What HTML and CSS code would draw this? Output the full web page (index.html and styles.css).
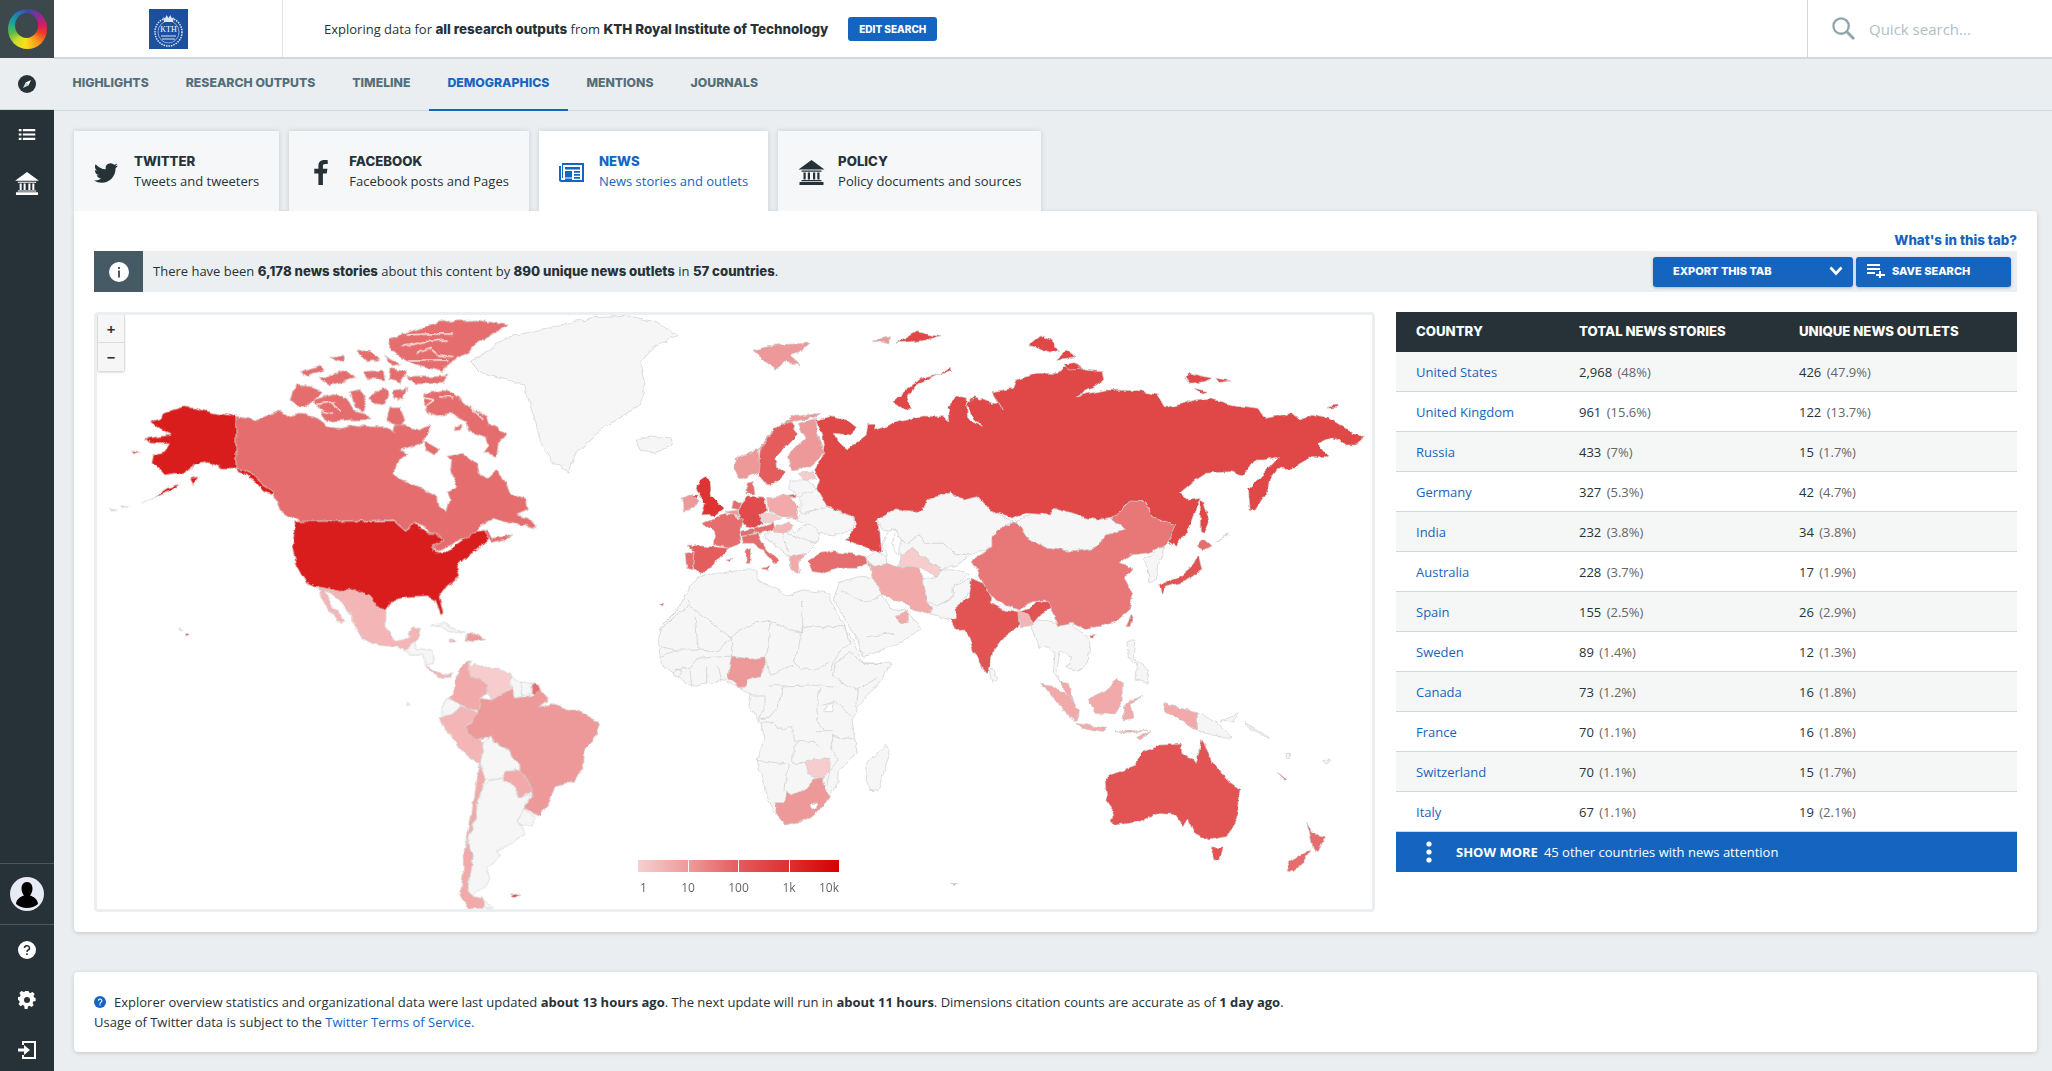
FILE: index.html
```html
<!DOCTYPE html>
<html lang="en">
<head>
<meta charset="utf-8">
<title>Demographics</title>
<link rel="stylesheet" href="styles.css">
</head>
<body>
<div class="app">
  <aside class="side">
    <div class="side-logo"><div class="ring"><div class="ring-hole"></div></div></div>
    <div class="side-compass">
      <svg viewBox="0 0 20 20" width="18" height="18"><circle cx="10" cy="10" r="10" fill="#263238"/><path d="M14.500 5.500 11.600 11.600 8.400 8.400Z" fill="#fff"/><path d="M5.500 14.500 8.400 8.400 11.600 11.600Z" fill="#cfd8dc"/></svg>
    </div>
    <div class="side-nav">
      <svg viewBox="0 0 18 12" width="18" height="11"><path fill="#fff" d="M0 0h3v2.400H0zM4.500 0H18v2.400H4.500zM0 4.800h3v2.400H0zM4.500 4.800H18v2.400H4.500zM0 9.600h3V12H0zM4.500 9.600H18V12H4.500z"/></svg>
      <svg viewBox="0 0 26 25" width="24" height="23"><path fill="#fff" d="M13 0 26 9.500H0zM1 22h24v3H1zM3 20h20v1.300H3zM3 10.500h20v1.300H3zM5 12.500h2.200V19.500H5zM9.300 12.500h2.200V19.500H9.300zM14.500 12.500h2.200V19.500h-2.200zM18.800 12.500H21V19.500h-2.200z"/></svg>
    </div>
    <div class="side-user">
      <svg viewBox="0 0 34 34" width="34" height="34"><circle cx="17" cy="17" r="17" fill="#e8eaf6"/><path fill="#000" d="M17 5c3.800 0 5.500 3 5.500 6.500 0 3-1.200 5.500-2.500 7 4 1.300 7.500 3.800 8 8.500a17 17 0 0 1-22 0c.5-4.700 4-7.200 8-8.500-1.300-1.500-2.500-4-2.500-7C11.500 8 13.200 5 17 5z"/></svg>
    </div>
    <div class="side-tools">
      <svg viewBox="0 0 18 18" width="18" height="18"><circle cx="9" cy="9" r="9" fill="#fff"/><path d="M6.500 7a2.500 2.300 0 1 1 3.700 2c-.9.500-1.200 1-1.200 2" fill="none" stroke="#263238" stroke-width="1.500"/><rect x="8.200" y="12.300" width="1.600" height="1.700" fill="#263238"/></svg>
      <svg viewBox="0 0 18 18" width="18" height="18"><path fill="#fff" d="M7.500 0h3l.5 2.500 1.600.7L14.800 2 17 4.200l-1.200 2.200.6 1.600L18 8.500v3l-2.500.5-.7 1.600 1.200 2.200-2.200 2.200-2.200-1.300-1.600.7-.5 2.500h-3L6 16.500l-1.600-.7L2.200 17 0 14.800l1.300-2.200-.7-1.600L-1 10.500V7.500L1.500 7l.7-1.600L1 3.200 3.200 1l2.200 1.200L7 1.500z" transform="translate(.5 -1) scale(.95)"/><circle cx="9" cy="9" r="3" fill="#263238"/></svg>
      <svg viewBox="0 0 18 18" width="18" height="18"><path fill="#fff" d="M4 0h14v18H4v-4h2v2h10V2H6v2H4z"/><path fill="#fff" d="M0 7.500h6V4l6 5-6 5v-3.500H0z"/></svg>
    </div>
  </aside>

  <main class="main">
    <header class="top">
      <div class="brand">
        <div class="kth">
          <svg viewBox="0 0 39 40" width="39" height="40"><rect width="39" height="40" fill="#1d4f9f"/><ellipse cx="19.500" cy="23" rx="13.500" ry="14" fill="none" stroke="#dce6f5" stroke-width="1.500" stroke-dasharray="1.500 1"/><ellipse cx="19.500" cy="23" rx="10.500" ry="11" fill="none" stroke="#dce6f5" stroke-width=".6"/><path d="M14 8l2 2 1.500-4 2 3 2-3 1.500 4 2-2-1 5H15z" fill="#dce6f5"/><text class="kth-txt" x="19.500" y="23">KTH</text><path d="M12 27h15M13 30h13" stroke="#dce6f5"/></svg>
        </div>
      </div>
      <div class="scope">
        <p class="scope-text">Exploring data for <b>all research outputs</b> from <b>KTH Royal Institute of Technology</b></p>
        <a class="edit-btn">EDIT SEARCH</a>
      </div>
      <div class="search">
        <svg viewBox="0 0 24 24" width="23" height="23"><circle cx="9.500" cy="9.500" r="8" fill="none" stroke="#90a4ae" stroke-width="2.400"/><path d="M15.500 15.500 23 23" stroke="#90a4ae" stroke-width="3"/></svg>
        <span class="search-ph">Quick search...</span>
      </div>
    </header>

    <nav class="nav">
      <a class="nav-item">HIGHLIGHTS</a>
      <a class="nav-item">RESEARCH OUTPUTS</a>
      <a class="nav-item">TIMELINE</a>
      <a class="nav-item active">DEMOGRAPHICS</a>
      <a class="nav-item">MENTIONS</a>
      <a class="nav-item">JOURNALS</a>
    </nav>

    <div class="content">
      <div class="tabs">
        <a class="tab">
          <span class="tab-icon"><svg viewBox="0 0 24 24" width="24" height="24"><path fill="#263238" d="M23.953 4.570a10 10 0 0 1-2.825.775 4.958 4.958 0 0 0 2.163-2.723c-.951.555-2.005.959-3.127 1.184a4.920 4.920 0 0 0-8.384 4.482C7.690 8.095 4.067 6.130 1.640 3.162a4.822 4.822 0 0 0-.666 2.475c0 1.710.870 3.213 2.188 4.096a4.904 4.904 0 0 1-2.228-.616v.060a4.923 4.923 0 0 0 3.946 4.827 4.996 4.996 0 0 1-2.212.085 4.936 4.936 0 0 0 4.604 3.417 9.867 9.867 0 0 1-6.102 2.105c-.390 0-.779-.023-1.170-.067a13.995 13.995 0 0 0 7.557 2.209c9.053 0 13.998-7.496 13.998-13.985 0-.210 0-.420-.015-.630A9.935 9.935 0 0 0 24 4.590z"/></svg></span>
          <span class="tab-text"><b>TWITTER</b><span>Tweets and tweeters</span></span>
        </a>
        <a class="tab">
          <span class="tab-icon"><svg class="fb" viewBox="0 0 14 26" width="14" height="25"><path fill="#263238" d="M9 26V14h4l.7-5H9V6.500c0-1.400.5-2.300 2.400-2.300H14V.2C13.500.1 12.100 0 10.400 0 6.800 0 4.300 2.200 4.300 6.100V9H0v5h4.300v12z"/></svg></span>
          <span class="tab-text"><b>FACEBOOK</b><span>Facebook posts and Pages</span></span>
        </a>
        <a class="tab current">
          <span class="tab-icon"><svg viewBox="0 0 25 19" width="25" height="19"><path fill="#1565c0" d="M3 0h22v19H2a2 2 0 0 1-2-2V3h2v14h21V2H4v13H3z"/><path fill="#1565c0" d="M6 4h15v2.500H6zM6 8h7v6.500H6zM15 8h6v1.800h-6zM15 11h6v1.800h-6zM15 14h6v1.800h-6zM6 15.500h7V17H6z"/></svg></span>
          <span class="tab-text"><b>NEWS</b><span>News stories and outlets</span></span>
        </a>
        <a class="tab">
          <span class="tab-icon"><svg viewBox="0 0 26 25" width="27" height="25"><path fill="#263238" d="M13 0 26 9.500H0zM1 22h24v3H1zM3 20h20v1.300H3zM3 10.500h20v1.300H3zM5 12.500h2.200V19.500H5zM9.300 12.500h2.200V19.500H9.300zM14.500 12.500h2.200V19.500h-2.200zM18.800 12.500H21V19.500h-2.200z"/></svg></span>
          <span class="tab-text"><b>POLICY</b><span>Policy documents and sources</span></span>
        </a>
      </div>

      <section class="panel">
        <div class="panel-link"><a>What's in this tab?</a></div>
        <div class="infobar">
          <span class="info-icon"><svg viewBox="0 0 20 20" width="20" height="20"><circle cx="10" cy="10" r="10" fill="#fff"/><rect x="9" y="8.500" width="2" height="7" fill="#455a64"/><rect x="9" y="5" width="2" height="2" fill="#455a64"/></svg></span>
          <p class="info-text">There have been <b>6,178 news stories</b> about this content by <b>890 unique news outlets</b> in <b>57 countries</b>.</p>
          <div class="info-actions">
            <a class="act-btn export"><span>EXPORT THIS TAB</span><svg viewBox="0 0 14 10" width="14" height="10"><path d="M1.500 1.500 7 7.500l5.500-6" fill="none" stroke="#fff" stroke-width="2.600"/></svg></a>
            <a class="act-btn save"><svg viewBox="0 0 18 14" width="18" height="14"><path fill="#fff" d="M0 0h13v2H0zM0 4h13v2H0zM0 8h8v2H0zM12 7h2v3h4v2h-4v3h-2v-3H9v-2h3z"/></svg><span>SAVE SEARCH</span></a>
          </div>
        </div>

        <div class="data">
          <div class="map">
            <svg class="world" viewBox="97 315 1275 594" width="1275" height="594">
              <defs>
                <filter id="rough" filterUnits="userSpaceOnUse" x="97" y="315" width="1275" height="594">
                  <feTurbulence type="fractalNoise" baseFrequency=".11" numOctaves="3" seed="7" result="n"/>
                  <feDisplacementMap in="SourceGraphic" in2="n" scale="5" xChannelSelector="R" yChannelSelector="G"/>
                  <feGaussianBlur stdDeviation=".35"/>
                </filter>
              </defs>
              <g class="rough">
              <!-- grey countries, page coordinates -->
              <g class="g">
                <polygon points="470,361 490,350 505,338 530,332 560,325 590,318 630,316 655,322 678,335 655,345 640,362 645,385 640,405 603,428 577,452 568,472 554,464 541,444 532,408 523,384 483,374"/>
                <polygon points="660,627 677,610 693,583 703,575 743,570 757,570 757,580 773,587 787,595 802,590 830,593 830,600 857,647 863,663 892,663 883,678 858,707 852,720 855,740 857,752 838,773 838,783 828,797 810,817 785,825 778,817 767,797 757,760 765,738 760,723 748,705 750,695 738,687 725,680 692,687 660,663 658,647 660,630"/>
              </g>
              <g class="g" transform="translate(650 600) scale(.3333)">
                <polygon points="705,430 718,465 700,520 685,570 660,572 645,545 655,480 690,455"/>
                <polygon points="1018,210 1030,205 1040,235 1025,245"/>
                <polyline class="ln" points="30,90 90,35 110,25 115,0"/>
                <polyline class="ln" points="115,15 240,110 320,65 360,65 458,102 458,0"/>
                <polyline class="ln" points="135,50 145,150 80,150 30,140"/>
                <polyline class="ln" points="145,150 205,155 245,110 245,168"/>
                <polyline class="ln" points="360,65 355,130 345,170"/>
                <polyline class="ln" points="458,80 585,80 600,130 575,150 550,185 540,215"/>
                <polyline class="ln" points="458,80 445,145 430,180 450,205 495,210 540,185"/>
                <polyline class="ln" points="350,175 360,225 430,195"/>
                <polyline class="ln" points="355,255 395,258 480,255 560,262"/>
                <polyline class="ln" points="555,190 600,155 640,190 695,190"/>
                <polyline class="ln" points="555,190 550,230 620,270 680,235"/>
                <polyline class="ln" points="625,270 620,320"/>
                <polyline class="ln" points="400,258 385,320 355,355 325,355"/>
                <polyline class="ln" points="300,285 345,285 345,320 325,355"/>
                <polyline class="ln" points="510,265 500,320 505,370 520,395"/>
                <polyline class="ln" points="510,320 550,300 605,350"/>
                <polyline class="ln" points="330,365 375,368 385,385 425,380 430,420 495,425 505,440"/>
                <polyline class="ln" points="445,420 430,440 428,490 465,490"/>
                <polyline class="ln" points="322,482 415,492 405,570"/>
                <polyline class="ln" points="545,405 610,420"/>
                <polyline class="ln" points="545,405 545,450 565,480 540,510 530,560"/>
                <polyline class="ln" points="495,395 545,395"/>
                <polyline class="ln" points="75,205 120,205 145,175 245,168"/>
                <polyline class="ln" points="120,205 125,260"/>
                <polyline class="ln" points="170,200 170,255"/>
                <polyline class="ln" points="205,195 215,245"/>
                <polyline class="ln" points="30,170 80,150"/>
                <circle class="ln" cx="82" cy="218" r="12"/>
                <polyline class="ln" points="640,100 740,115 760,100"/>
                <polygon class="hole" points="528,310 552,308 548,332 528,332"/>
              </g>
              <g class="g" transform="translate(660 400) scale(.3333)">
                <polygon points="540,545 600,530 640,530 665,585 690,625 735,630 750,645 785,685 720,730 610,770 590,715 520,600 530,570"/>
                <polyline class="ln" points="620,710 700,700"/>
                <polyline class="ln" points="540,570 620,610 665,585"/>
                <polygon points="650,350 680,330 760,335 790,325 800,295 875,280 950,290 1000,335 1060,365 1020,385 1000,440 930,465 880,460 850,430 800,430 775,405 745,430 720,420 710,390 680,395 660,380"/>
                <polygon points="720,420 745,430 775,405 800,430 850,430 880,460 930,465 900,490 850,510 800,480 760,445 720,465"/>
                <polygon points="790,540 825,530 850,510 890,510 930,520 880,560 880,590 830,620 815,625 800,600"/>
                <polygon points="800,600 830,620 880,590 880,560 930,535 945,540 935,570 890,620 895,660 870,660 810,640"/>
                <polygon points="620,470 650,455 680,470 680,500 640,500 625,480"/>
                <polygon points="420,345 500,320 580,350 580,385 530,405 480,400 440,375 410,360"/>
                <polygon points="420,285 470,265 505,320 420,340"/>
                <polygon points="390,240 440,240 470,265 420,290 390,270"/>
                <polygon points="310,410 340,385 380,375 400,395 450,370 480,400 470,430 440,460 385,470 350,440"/>
                <polyline class="ln" points="380,400 450,425 470,430"/>
                <polyline class="ln" points="370,400 385,470"/>
                <polygon class="hole" points="680,400 710,390 695,430 720,470 715,510 680,500 680,465 665,435"/>
              </g>
              <g class="g" transform="translate(300 600) scale(.3333)">
                <polygon points="310,150 340,120 350,145 395,150 400,190 380,195 370,165 330,165"/>
                <polygon points="390,75 430,70 470,90 495,100 450,95 420,80"/>
                <polygon points="635,225 660,250 670,290 645,295 640,265 630,250"/>
                <polygon points="660,250 695,248 695,280 670,285"/>
                <polygon points="425,325 440,295 470,305 485,320 450,345 440,355 425,345"/>
                <polygon points="548,425 575,408 585,430 630,450 635,470 660,490 660,510 615,515 610,535 570,540 555,540 540,490 545,465"/>
                <polygon points="670,625 705,650 700,675 665,675 655,660"/>
                <polygon points="570,540 610,535 650,570 660,592 700,580 670,622 655,660 665,680 675,700 640,725 610,745 590,750 600,770 565,800 565,850 540,870 510,890 500,870 510,820 520,760 500,730 525,660 530,620 550,560"/>
                <polygon points="318,308 328,312 318,318"/>
                <polygon points="550,895 580,925 555,925"/>
              </g>
              <g class="g" transform="translate(960 620) scale(.3333)">
                <polygon points="215,0 240,0 285,10 320,0 390,60 385,130 350,155 320,140 335,110 300,90 290,160 300,185 280,160 285,100 260,80 240,85 215,30"/>
                <polygon points="500,60 525,60 520,110 565,150 565,190 525,180 530,130 505,110"/>
                <polygon points="712,275 770,310 815,350 800,355 740,340 712,335"/>
                <polygon points="780,305 835,280 820,305"/>
                <polygon points="855,305 930,355 915,350 860,315"/>
                <polygon points="978,400 992,400 990,415 980,415"/>
                <polygon points="1088,422 1110,415 1100,432"/>
              </g>
              <g class="g" transform="translate(830 320) scale(.3444 .3333)">
                <polygon points="540,603 590,580 640,585 650,565 710,585 770,600 820,590 825,600 860,630 800,645 770,685 710,695 630,685 570,650"/>
                <polygon points="910,720 950,690 975,680 955,730 950,780 925,785 925,740"/>
                <polygon points="1120,665 1160,640 1130,660"/>
              </g>
              <polygon class="g-i" points="635,440 650,436 670,438 672,445 655,453 640,450"/>

              <!-- North America -->
              <g transform="translate(100 310) scale(.3333)">
                <g class="c-ca">
                  <polygon points="408,318 465,330 505,315 540,300 570,320 600,312 640,320 665,330 680,350 720,355 770,345 810,350 860,350 880,365 890,340 925,350 960,360 990,345 990,370 970,385 965,400 900,420 925,430 905,445 885,465 882,490 905,510 955,530 1010,560 1015,590 1040,605 1050,570 1040,545 1070,530 1065,510 1050,490 1055,450 1040,440 1090,430 1130,460 1140,495 1165,505 1190,480 1215,510 1230,550 1280,570 1285,600 1250,615 1285,625 1310,655 1270,645 1230,640 1180,625 1140,650 1125,665 1165,660 1175,685 1210,680 1240,670 1215,690 1180,700 1160,680 1130,665 1115,685 1080,690 1050,705 1010,725 1000,705 1030,690 1005,670 985,670 975,650 945,640 915,660 880,630 600,635 570,620 540,600 520,550 490,525 460,495 430,480 408,475"/>
                  <polygon points="975,250 1030,240 1060,250 1100,285 1160,320 1165,340 1220,370 1195,400 1190,440 1150,425 1165,405 1155,380 1110,365 1095,335 1050,310 1010,320 985,310 970,280"/>
                  <polygon points="970,390 1020,420 1000,435 975,420"/>
                  <polygon points="1065,350 1085,345 1085,360 1065,362"/>
                  <polygon points="570,270 585,225 640,230 665,250 625,285 600,290"/>
                  <polygon points="640,270 700,250 740,265 760,300 800,310 810,330 750,330 680,335 660,300"/>
                  <polygon points="750,245 780,238 800,280 790,305 765,290"/>
                  <polygon points="805,260 850,235 865,250 855,285 820,280"/>
                  <polygon points="880,240 925,235 905,270 880,260"/>
                  <polygon points="870,290 900,290 915,335 890,350 860,330"/>
                  <polygon points="915,70 1020,35 1130,30 1225,45 1130,100 1100,130 1040,165 1030,185 960,170 900,140 865,110 870,85"/>
                  <polygon points="915,200 1040,195 1030,220 950,222"/>
                  <polygon points="600,185 660,165 670,180 620,200"/>
                  <polygon points="660,205 735,180 770,205 690,225"/>
                  <polygon points="770,125 810,120 840,150 800,155"/>
                  <polygon points="850,135 900,165 880,170"/>
                  <polygon points="790,185 850,180 855,210 800,205"/>
                  <polygon points="870,175 920,185 900,220 865,205"/>
                  <polygon points="690,145 730,135 730,160"/>
                </g>
                <polyline class="ch" points="920,75 985,72 1060,72"/>
                <polyline class="ch" points="905,110 975,95 1040,90"/>
                <polyline class="ch" points="950,130 990,115 1015,135 1060,140"/>
                <polyline class="ch" points="925,150 975,150 1045,150"/>
                <polyline class="ch" points="940,255 1000,270 970,290"/>
                <polyline class="ch" points="1020,260 1060,265"/>
                <polyline class="ch" points="1110,290 1150,330"/>
                <polyline class="ch" points="640,285 700,275 720,305"/>
                <polyline class="ch" points="650,300 700,310"/>
                <g class="c-us">
                  <polygon points="408,318 340,308 290,295 250,290 215,300 185,312 180,325 150,335 175,355 190,365 212,375 175,380 135,385 150,400 205,402 190,425 160,435 155,460 170,470 195,495 225,490 250,495 265,480 290,462 320,458 345,462 370,475 408,475"/>
                  <polygon points="408,475 430,480 460,495 490,525 520,545 515,555 490,545 470,520 440,495 408,480"/>
                  <polygon points="240,520 225,535 190,550 125,580 165,560 200,535"/>
                  <polygon points="270,505 295,500 280,525"/>
                  <polygon points="95,420 125,428 100,428"/>
                  <polygon points="580,635 880,632 915,662 945,640 985,670 1005,670 1030,690 1000,705 1005,728 1040,725 1090,690 1125,665 1150,660 1165,685 1130,720 1095,745 1070,770 1080,800 1030,840 1018,860 1030,910 1022,915 1005,870 985,858 930,860 880,870 855,905 830,885 810,860 770,840 720,845 650,830 615,815 590,770 578,720 585,670"/>
                  <polygon points="258,972 268,975 262,982"/>
                  <polygon points="235,953 250,960 240,958"/>
                </g>
                <g class="c-mx">
                  <polygon points="30,595 50,597 32,599"/>
                  <polygon points="65,592 85,590 70,595"/>
                  <polygon points="650,830 720,845 770,840 810,860 830,885 855,905 855,950 885,990 925,985 935,955 965,955 955,985 935,1000 920,1018 885,1010 830,1005 790,985 770,960 755,920 725,880 700,855"/>
                  <polygon points="655,832 672,840 695,885 735,935 725,940 685,900 665,860"/>
                </g>
              </g>

              <!-- Central and South America -->
              <g transform="translate(300 600) scale(.3333)">
                <polygon class="c-mx" points="375,195 410,215 430,225 460,215 455,225 430,235 415,232 395,215"/>
                <polygon class="c-pk" points="500,105 525,100 555,118 520,125 495,120"/>
                <polygon class="c-pk" points="450,118 470,118 470,123 452,123"/>
                <polygon class="c-co" points="515,182 490,195 470,225 460,280 445,295 470,310 510,325 535,335 540,295 560,280 560,255 540,235 510,225 505,200"/>
                <polygon class="c-ve" points="505,200 525,190 550,200 600,205 635,225 630,255 640,265 600,285 575,300 560,270 560,250 540,235 510,225"/>
                <polygon class="c-gf" points="697,250 715,255 722,272 705,285 697,280"/>
                <polygon class="c-mx" points="420,350 450,345 485,320 510,325 540,345 500,375 510,400 548,425 545,465 540,490 515,480 460,420 435,385"/>
                <polygon class="c-pk" points="500,380 535,345 540,295 575,300 640,265 645,295 700,285 720,270 745,300 715,325 755,310 800,330 840,335 895,365 895,400 855,445 850,500 825,545 765,560 750,600 720,650 670,622 700,590 685,545 660,510 660,490 635,470 630,450 585,430 575,408 530,418 510,405"/>
                <polygon class="c-co" points="615,515 660,510 685,545 695,575 660,592 650,570 615,540"/>
                <polygon class="c-co" points="540,490 555,540 530,620 525,660 500,730 520,760 510,830 500,870 520,890 550,895 550,925 510,925 480,890 490,815 490,770 510,670"/>
                <polygon class="c-fk" points="628,885 660,882 640,893"/>
              </g>

              <!-- Europe and Middle East -->
              <g transform="translate(660 400) scale(.3333)">
                <polygon class="c-uk" points="120,240 135,230 150,240 155,290 190,325 165,345 125,348 135,310 110,270"/>
                <polygon class="c-pk" points="65,295 95,280 115,300 100,325 70,330"/>
                <polygon class="c-uk" points="90,285 115,285 110,295"/>
                <polygon class="c-pk" points="225,175 295,150 300,215 240,240 225,210"/>
                <polygon class="c-pk" points="295,150 330,100 395,50 480,40 470,50 400,65 350,90 310,145"/>
                <polygon class="c-es" points="300,150 345,85 390,65 415,100 345,175 350,205 380,215 355,240 325,260 295,225"/>
                <polygon class="c-pk" points="415,70 470,55 470,100 495,160 450,200 395,210 385,165 435,115"/>
                <polygon class="c-ve" points="415,220 460,215 470,240 430,240"/>
                <polygon class="c-ca" points="258,250 280,245 285,285 258,285"/>
                <polygon class="c-de" points="262,290 315,295 320,330 300,345 310,370 290,385 245,375 235,340 245,310"/>
                <polygon class="c-co" points="320,295 385,285 415,320 410,355 365,350 325,330"/>
                <polygon class="c-ve" points="300,345 325,335 365,355 330,370 310,365"/>
                <polygon class="c-mx" points="340,385 390,365 400,375 380,400 345,400"/>
                <polygon class="c-ca" points="290,385 340,370 345,388 300,400 245,395"/>
                <polygon class="c-ca" points="240,395 275,385 285,400 245,410"/>
                <polygon class="c-ca" points="220,305 245,305 240,330 215,325"/>
                <polygon class="c-pk" points="195,335 235,330 235,350 215,345"/>
                <polygon class="c-ca" points="125,370 195,340 250,360 240,405 245,430 205,445 160,435 165,395"/>
                <polygon class="c-ca" points="245,410 295,400 305,420 320,450 360,480 340,490 315,455 280,430 250,430"/>
                <polygon class="c-ca" points="300,505 330,500 325,515"/>
                <polygon class="c-ca" points="258,450 272,445 270,490 258,490"/>
                <polygon class="c-es" points="85,435 155,440 205,445 150,505 125,520 100,510 105,455"/>
                <polygon class="c-ca" points="75,460 105,455 100,510 80,505"/>
                <polygon class="c-es" points="198,480 215,478 210,485"/>
                <polygon class="c-co" points="385,470 440,462 415,490 420,520 395,505"/>
                <polygon class="c-ca" points="445,480 480,460 520,455 580,462 620,470 625,490 590,505 540,505 490,520 460,515"/>
                <polygon class="c-co" points="625,480 640,500 680,490 710,500 780,505 790,540 800,600 815,625 805,640 765,630 720,605 665,585 640,530"/>
                <polygon class="c-ve" points="720,465 760,445 800,480 850,510 825,530 790,505 720,500"/>
                <polygon class="c-co" points="705,650 745,630 745,665 720,670"/>
                <polygon class="c-es" points="385,285 405,282 405,290 385,290"/>
              </g>

              <!-- Africa accents -->
              <g transform="translate(650 600) scale(.3333)">
                <polygon class="c-pk" points="245,168 300,178 345,170 350,190 330,230 300,240 285,262 260,262 250,240 232,238 240,190"/>
                <polygon class="c-pk" points="375,605 405,605 410,570 420,585 465,570 490,540 520,535 530,580 538,590 520,620 470,660 405,675 385,650"/>
                <polygon class="hole-w" points="480,615 500,605 500,625 485,628"/>
                <polygon class="c-ve" points="465,490 490,475 540,478 540,505 525,535 490,535 470,510"/>
                <polygon class="c-ca" points="25,12 45,10 40,18"/>
                <polygon class="c-pk" points="905,850 920,852 912,860"/>
              </g>

              <!-- Russia and Asia -->
              <g transform="translate(830 320) scale(.3444 .3333)">
                <polygon class="c-ru" points="-40,300 0,290 50,300 80,325 60,345 10,340 25,365 45,385 75,370 105,345 110,310 130,310 130,330 200,305 250,295 270,288 330,290 345,305 340,260 370,225 395,230 400,300 445,320 420,300 395,255 420,230 470,250 490,250 500,270 470,215 530,205 540,180 600,160 660,160 680,140 720,130 740,150 790,155 795,180 760,205 715,228 800,210 900,212 950,225 975,265 1060,240 1100,235 1170,255 1245,265 1265,295 1340,280 1365,300 1400,283 1450,295 1520,340 1553,350 1525,375 1500,375 1460,350 1415,370 1450,410 1400,410 1340,445 1300,445 1280,470 1275,505 1235,570 1220,575 1215,505 1250,470 1305,410 1260,420 1235,420 1200,465 1160,455 1090,460 1060,480 1015,520 1045,540 1075,535 1050,610 1005,680 975,660 1005,615 975,605 935,590 915,545 870,545 825,590 775,600 710,585 650,565 640,585 570,580 530,595 465,570 430,530 390,540 350,518 280,540 270,575 190,570 135,600 145,640 150,695 140,700 100,680 45,660 75,625 70,590 -10,560 -40,505 -30,480 -45,450 -15,400 -25,345"/>
                <polygon class="c-ru" points="350,145 310,165 265,175 215,215 185,245 210,265 240,270 222,235 250,195 310,165 350,155"/>
                <polygon class="c-ru" points="580,75 615,45 640,60 665,90 640,100 600,85"/>
                <polygon class="c-ru" points="655,118 685,90 715,110 690,115"/>
                <polygon class="c-ru" points="680,132 710,128 735,148 690,150"/>
                <polygon class="c-pk" points="120,60 180,50 170,72"/>
                <polygon class="c-ru" points="195,68 250,35 320,50 270,62"/>
                <polygon class="c-ru" points="1030,170 1045,160 1110,175 1090,185 1045,190"/>
                <polygon class="c-ru" points="1120,175 1165,183 1130,187"/>
                <polygon class="c-ru" points="1060,205 1095,215 1075,220"/>
                <polygon class="c-ru" points="1445,258 1475,255 1475,262 1445,265"/>
                <polygon class="c-ru" points="1075,540 1085,545 1100,600 1085,640 1075,635"/>
                <polygon class="c-cn" points="540,603 570,650 630,685 710,695 770,685 800,645 860,630 820,595 860,555 870,543 915,545 935,590 975,605 1005,615 985,660 970,680 915,700 875,705 840,730 880,745 855,775 880,820 870,870 830,905 780,920 740,925 700,910 660,920 650,885 625,840 590,845 545,875 510,860 470,835 445,790 410,725 470,680 470,650 495,625 530,610"/>
                <polygon class="c-in" points="410,775 445,790 470,835 510,860 548,878 580,865 600,845 635,845 640,865 610,885 585,915 570,890 550,885 548,922 510,945 475,990 465,1030 456,1062 440,1040 415,990 395,930 365,932 350,900 370,895 365,860 405,830"/>
                <polygon class="g-i" points="470,832 510,855 550,870 545,878 500,868 468,850"/>
                <polygon class="c-mx" points="545,875 580,880 590,915 555,922 548,900"/>
                <polygon class="c-in" points="955,795 1015,770 1055,735 1070,705 1080,750 1030,785 975,800 965,825"/>
                <polygon class="c-ca" points="1065,680 1085,655 1110,678 1080,690"/>
                <polygon class="c-ca" points="860,920 875,885 880,895 870,920"/>
                <polygon class="c-es" points="750,950 770,940 765,955"/>
              </g>

              <!-- Oceania -->
              <g transform="translate(960 620) scale(.3333)">
                <polygon class="c-co" points="245,190 275,195 340,240 355,270 352,305 320,280 285,240"/>
                <polygon class="c-co" points="300,185 325,190 340,240 320,225"/>
                <polygon class="c-co" points="385,235 440,210 470,175 490,190 490,240 465,285 405,280"/>
                <polygon class="c-co" points="350,310 440,325 430,335 365,322"/>
                <polygon class="c-co" points="465,335 570,330 510,340"/>
                <polygon class="c-co" points="530,352 570,335 540,360"/>
                <polygon class="c-co" points="490,260 510,240 550,230 510,250 520,295 490,300"/>
                <polygon class="c-co" points="610,250 660,265 712,275 712,335 690,320 650,290 615,270"/>
                <polygon class="c-in" points="435,480 450,465 520,440 550,395 600,375 665,372 665,400 710,430 725,355 760,430 810,490 840,510 835,585 800,650 750,660 700,640 685,595 670,620 640,580 600,578 540,605 470,615 450,605 460,570 440,540"/>
                <polygon class="c-in" points="750,685 790,680 780,720 765,720"/>
                <polygon class="c-ca" points="1040,610 1060,640 1095,650 1075,695 1060,690 1055,660"/>
                <polygon class="c-ca" points="1050,690 1030,730 1000,755 978,750 990,725"/>
                <polygon class="c-es" points="952,458 980,475 975,478"/>
              </g>

              <polygon class="c-pk" points="753,350 775,345 810,343 800,352 790,356 800,365 785,362 775,370 765,362"/>
              </g>
            </svg>

            <div class="zoom-ctl"><button class="zoom-b">+</button><button class="zoom-b">−</button></div>

            <div class="legend">
              <div class="legend-bar"><i class="s1"></i><i class="s2"></i><i class="s3"></i><i class="s4"></i></div>
              <div class="legend-labels"><span>1</span><span>10</span><span>100</span><span>1k</span><span>10k</span></div>
            </div>
          </div>

          <div class="table-wrap">
            <table class="tbl">
              <colgroup><col class="c1"><col class="c2"><col class="c3"></colgroup>
              <thead><tr><th>COUNTRY</th><th>TOTAL NEWS STORIES</th><th>UNIQUE NEWS OUTLETS</th></tr></thead>
              <tbody>
                <tr><td><a>United States</a></td><td>2,968 <em>(48%)</em></td><td>426 <em>(47.9%)</em></td></tr>
                <tr><td><a>United Kingdom</a></td><td>961 <em>(15.6%)</em></td><td>122 <em>(13.7%)</em></td></tr>
                <tr><td><a>Russia</a></td><td>433 <em>(7%)</em></td><td>15 <em>(1.7%)</em></td></tr>
                <tr><td><a>Germany</a></td><td>327 <em>(5.3%)</em></td><td>42 <em>(4.7%)</em></td></tr>
                <tr><td><a>India</a></td><td>232 <em>(3.8%)</em></td><td>34 <em>(3.8%)</em></td></tr>
                <tr><td><a>Australia</a></td><td>228 <em>(3.7%)</em></td><td>17 <em>(1.9%)</em></td></tr>
                <tr><td><a>Spain</a></td><td>155 <em>(2.5%)</em></td><td>26 <em>(2.9%)</em></td></tr>
                <tr><td><a>Sweden</a></td><td>89 <em>(1.4%)</em></td><td>12 <em>(1.3%)</em></td></tr>
                <tr><td><a>Canada</a></td><td>73 <em>(1.2%)</em></td><td>16 <em>(1.8%)</em></td></tr>
                <tr><td><a>France</a></td><td>70 <em>(1.1%)</em></td><td>16 <em>(1.8%)</em></td></tr>
                <tr><td><a>Switzerland</a></td><td>70 <em>(1.1%)</em></td><td>15 <em>(1.7%)</em></td></tr>
                <tr><td><a>Italy</a></td><td>67 <em>(1.1%)</em></td><td>19 <em>(2.1%)</em></td></tr>
              </tbody>
            </table>
            <a class="show-more">
              <svg viewBox="0 0 6 22" width="6" height="22"><circle cx="3" cy="3" r="2.600" fill="#fff"/><circle cx="3" cy="11" r="2.600" fill="#fff"/><circle cx="3" cy="19" r="2.600" fill="#fff"/></svg>
              <b>SHOW MORE</b><span>45 other countries with news attention</span>
            </a>
          </div>
        </div>
      </section>

      <section class="foot">
        <p class="foot-line"><svg viewBox="0 0 12 12" width="12" height="12"><circle cx="6" cy="6" r="6" fill="#1565c0"/><path d="M4.300 4.800a1.800 1.700 0 1 1 2.600 1.500c-.6.300-.9.700-.9 1.400" fill="none" stroke="#fff" stroke-width="1.100"/><rect x="5.400" y="8.400" width="1.200" height="1.200" fill="#fff"/></svg><span>Explorer overview statistics and organizational data were last updated <b>about 13 hours ago</b>. The next update will run in <b>about 11 hours</b>. Dimensions citation counts are accurate as of <b>1 day ago</b>.</span></p>
        <p class="foot-line plain">Usage of Twitter data is subject to the <a>Twitter Terms of Service</a><a>.</a></p>
      </section>
    </div>
  </main>
</div>
</body>
</html>
```

FILE: styles.css
```css
* { box-sizing: border-box; }
html, body { margin: 0; padding: 0; height: 100%; overflow: hidden; }
body { font-family: "Open Sans", "Noto Sans", sans-serif; font-size: 13px; color: #263238; background: #eaeef1; }
p { margin: 0; }
a { color: #1565c0; text-decoration: none; }

.app { display: flex; width: 2052px; height: 1071px; }

/* Sidebar */
.side { width: 54px; flex: none; background: #263238; display: flex; flex-direction: column; }
.side-logo { height: 58px; background: #3d484d; display: flex; align-items: center; justify-content: center; }
.ring { position: relative; width: 39px; height: 40px; border-radius: 50%; background: conic-gradient(from 0deg, #3b4aa8, #8e2a9a 40deg, #d81b60 75deg, #ef3b24 105deg, #f7941d 140deg, #f9e21b 190deg, #c9dc2a 225deg, #5dbb46 255deg, #12a59c 295deg, #2a6fb8 335deg, #3b4aa8); }
.ring-hole { position: absolute; left: 7px; top: 4px; width: 23px; height: 25px; border-radius: 50%; background: #3d484d; }
.side-compass { height: 52px; background: #eaeef1; border-bottom: 1px solid #cfd8dc; display: flex; align-items: center; justify-content: center; }
.side-nav { flex: 1; display: flex; flex-direction: column; align-items: center; padding-top: 19px; gap: 32px; }
.side-user { height: 62px; border-top: 1px solid #4a565c; border-bottom: 1px solid #4a565c; display: flex; align-items: center; justify-content: center; }
.side-tools { display: flex; flex-direction: column; align-items: center; gap: 32px; padding: 16px 0 12px; }

.main { flex: 1; min-width: 0; display: flex; flex-direction: column; }

/* Top bar */
.top { height: 59px; flex: none; background: #fff; border-bottom: 2px solid #cfd8dc; display: flex; align-items: stretch; }
.brand { width: 229px; border-right: 1px solid #dfe5e8; display: flex; align-items: flex-start; justify-content: center; padding-top: 9px; }
.kth { width: 39px; height: 40px; }
.kth-txt { font: 8px "Liberation Serif", serif; fill: #fff; text-anchor: middle; }
.scope { flex: 1; display: flex; align-items: center; padding-left: 41px; gap: 20px; }
.scope-text { font-size: 13px; }
.scope-text b { font-family: Inter, sans-serif; font-weight: 800; font-size: 13.400px; }
.edit-btn { background: #1565c0; color: #fff; font: 800 10px Inter, sans-serif; height: 24px; width: 89px; border-radius: 3px; display: flex; align-items: center; justify-content: center; margin-top: 1px; }
.search { width: 245px; border-left: 1px solid #cfd8dc; display: flex; align-items: center; padding-left: 24px; gap: 14px; }
.search-ph { font-size: 15px; color: #b0bec5; }

/* Main nav */
.nav { height: 52px; flex: none; display: flex; border-bottom: 1px solid #cfd8dc; }
.nav-item { height: 52px; padding: 0 18.500px 5px; display: flex; align-items: center; font: 800 12.250px Inter, sans-serif; color: #546e7a; }
.nav-item.active { color: #1565c0; border-bottom: 2px solid #1565c0; padding-bottom: 3px; }

/* Content */
.content { flex: 1; padding: 20px 15px 0 20px; min-height: 0; }
.tabs { display: flex; gap: 10px; height: 80px; }
.tab { position: relative; height: 80px; background: #f5f7f9; display: flex; align-items: center; padding: 0 20px; box-shadow: 0 0 5px rgba(0, 0, 0, .14); clip-path: inset(-6px -6px 0 -6px); color: #263238; }
.tab.current { background: #fff; color: #1565c0; }
.tab-icon { width: 40px; flex: none; display: flex; align-items: center; padding-top: 3px; }
.fb { margin-left: 5px; }
.tab-text { display: flex; flex-direction: column; gap: 3px; white-space: nowrap; }
.tab-text b { font: 800 13.200px/16px Inter, sans-serif; }
.tab-text span { font-size: 13px; line-height: 18px; }

.panel { background: #fff; border-radius: 0 4px 4px 4px; box-shadow: 0 1px 4px rgba(0, 0, 0, .16); padding: 20px; }
.panel-link { height: 20px; text-align: right; font: 800 13.300px/18px Inter, sans-serif; }
.infobar { height: 41px; background: #eceff1; display: flex; align-items: center; padding-right: 6px; }
.info-icon { width: 49px; height: 41px; background: #455a64; display: flex; align-items: center; justify-content: center; }
.info-text { flex: 1; padding: 0 0 2px 10px; }
.info-text b { font-family: Inter, sans-serif; font-weight: 800; font-size: 13.200px; }
.info-actions { display: flex; gap: 3px; }
.act-btn { height: 30px; background: #1565c0; color: #fff; border-radius: 3px; font: 800 11px Inter, sans-serif; display: flex; align-items: center; padding-bottom: 1px; box-shadow: 0 1px 3px rgba(0, 0, 0, .25); }
.export { width: 200px; padding: 0 10px 1px 20px; justify-content: space-between; }
.save { width: 155px; padding-left: 11px; gap: 7px; }

.data { display: flex; gap: 21px; margin-top: 20px; align-items: flex-start; }
.map { position: relative; width: 1281px; height: 600px; flex: none; border: 3px solid #eceff1; border-radius: 4px; background: #fff; overflow: hidden; }
.world { display: block; }
.rough { filter: url(#rough); }
.world polygon, .world polyline, .world circle { stroke: #cfcfcf; stroke-width: .7px; vector-effect: non-scaling-stroke; stroke-linejoin: round; }
.world polyline.ch { fill: none; stroke: #fff; stroke-width: 1.200px; }
.g polygon, .g-i { fill: #f6f6f6; }
.g .ln { fill: none; stroke: #cccccc; }
.g .hole, .hole-w { fill: #fff; }
.c-us polygon { fill: #d91b1b; stroke: #e3e3e3; }
.c-ca, .c-ca polygon { fill: #e66d6d; }
.c-mx, .c-mx polygon { fill: #f3b5b5; }
.c-uk { fill: #df3030; }
.c-ru { fill: #e04646; }
.c-in { fill: #e25353; }
.c-de { fill: #e24c4c; }
.c-es { fill: #e45c5c; }
.c-cn { fill: #e87777; }
.c-pk { fill: #ed9999; }
.c-co { fill: #f1a9a9; }
.c-ve { fill: #f6cccc; }
.c-gf { fill: #e66d6d; }
.c-fk { fill: #d93b3b; }

.zoom-ctl { position: absolute; left: 0; top: 0; width: 28px; display: flex; flex-direction: column; border: 1px solid #dcdcdc; border-width: 0 1px 1px 1px; border-radius: 0 0 3px 3px; box-shadow: 0 1px 2px rgba(0, 0, 0, .12); }
.zoom-b { width: 26px; height: 28px; background: #f6f6f6; border: 0; border-bottom: 1px solid #dcdcdc; padding: 0; font: 700 15px "Open Sans", sans-serif; color: #333; }
.zoom-b:last-child { border-bottom: 0; }

.legend { position: absolute; left: 541px; top: 545px; width: 201px; }
.legend-bar { display: flex; height: 12px; gap: 1px; }
.legend-bar i { display: block; flex: 1; }
.s1 { background: linear-gradient(90deg, #f6cfcf, #ee9a9a); }
.s2 { background: linear-gradient(90deg, #ee9a9a, #e45c5c); }
.s3 { background: linear-gradient(90deg, #e45c5c, #df2f2f); }
.s4 { background: linear-gradient(90deg, #df2f2f, #d40000); }
.legend-labels { display: grid; grid-template-columns: 25px 50px 51px 50px 25px; margin-top: 7px; font-size: 12px; color: #666; text-align: center; white-space: nowrap; }
.legend-labels span:first-child { text-align: left; padding-left: 2px; }
.legend-labels span:last-child { direction: rtl; text-align: right; unicode-bidi: plaintext; }

/* Table */
.table-wrap { width: 621px; flex: none; }
.tbl { width: 621px; table-layout: fixed; border-collapse: separate; border-spacing: 0; }
.c1 { width: 183px; }
.c2 { width: 220px; }
.c3 { width: 218px; }
.tbl th { height: 40px; background: #263238; color: #fff; font: 800 13.200px Inter, sans-serif; text-align: left; padding: 0 0 2px 20px; }
.tbl th + th { padding-left: 0; }
.tbl td { height: 40px; padding: 0 0 0 20px; border-bottom: 1px solid #cfd8dc; font-size: 13px; }
.tbl td + td { padding-left: 0; }
.tbl tr:nth-child(odd) td { background: #f5f7f7; }
.tbl em { font-style: normal; color: #666; padding-left: 2px; }
.show-more { height: 40px; background: #1565c0; color: #fff; display: flex; align-items: center; padding-left: 30px; font-size: 13px; }
.show-more b { margin-left: 24px; margin-right: 6px; font-size: 13px; }

/* Footer */
.foot { margin-top: 40px; height: 80px; background: #fff; border-radius: 4px; box-shadow: 0 1px 4px rgba(0, 0, 0, .16); padding: 20px; }
.foot-line { height: 20px; line-height: 20px; display: flex; align-items: center; gap: 8px; }
.foot-line.plain { display: block; }
```
